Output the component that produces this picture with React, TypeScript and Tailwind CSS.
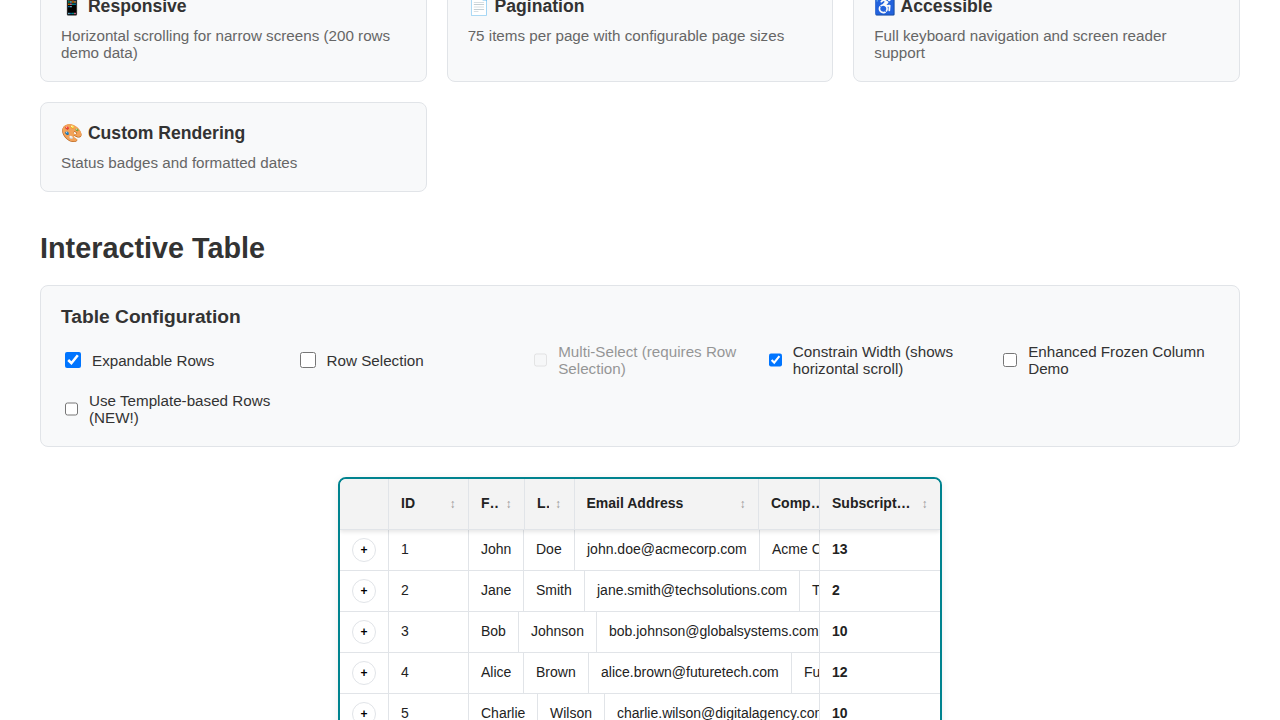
const features = [
  { icon: "📱", title: "Responsive", text: "Horizontal scrolling for narrow screens (200 rows demo data)" },
  { icon: "📄", title: "Pagination", text: "75 items per page with configurable page sizes" },
  { icon: "♿", title: "Accessible", text: "Full keyboard navigation and screen reader support" },
  { icon: "🎨", title: "Custom Rendering", text: "Status badges and formatted dates" },
];

const options = [
  { label: "Expandable Rows", checked: true },
  { label: "Row Selection" },
  { label: "Multi-Select (requires Row Selection)", disabled: true },
  { label: "Constrain Width (shows horizontal scroll)", checked: true },
  { label: "Enhanced Frozen Column Demo" },
  { label: "Use Template-based Rows (NEW!)" },
];

const columns = [
  { label: "ID", width: 80 },
  { label: "First Name", width: 56 },
  { label: "Last Name", width: 49.5 },
  { label: "Email Address", width: 184.5 },
  { label: "Company", width: 96 },
];

const rows = [
  { id: 1, first: "John", last: "Doe", email: "john.doe@acmecorp.com", company: "Acme Corporation", subs: 13, w: [80, 55, 51, 185] },
  { id: 2, first: "Jane", last: "Smith", email: "jane.smith@techsolutions.com", company: "TechSolutions", subs: 2, w: [80, 55, 61, 215] },
  { id: 3, first: "Bob", last: "Johnson", email: "bob.johnson@globalsystems.com", company: "Global Systems", subs: 10, w: [80, 50, 78, 240] },
  { id: 4, first: "Alice", last: "Brown", email: "alice.brown@futuretech.com", company: "FutureTech", subs: 12, w: [80, 55, 65, 203] },
  { id: 5, first: "Charlie", last: "Wilson", email: "charlie.wilson@digitalagency.com", company: "Digital Agency", subs: 10, w: [80, 69, 67, 260] },
];

function SortIcon() {
  return <span className="w-[7px] shrink-0 text-center text-[12px] leading-none text-[#999]">↕</span>;
}

export default function App() {
  return (
    <div className="h-[720px] overflow-hidden bg-white font-['Liberation_Sans',Arial,sans-serif] text-[#333]">
      <div className="mx-auto mt-[-25px] w-[1200px]">
        <div className="grid grid-cols-3 gap-5">
          {features.map((f) => (
            <div key={f.title} className="rounded-lg border border-[#e1e4e8] bg-[#f8f9fa] p-5">
              <h3 className="mb-[11px] text-[17.6px] leading-[20px] font-bold text-[#333]">
                {f.icon} {f.title}
              </h3>
              <p className="text-[15.2px] leading-[17px] text-[#666]">{f.text}</p>
            </div>
          ))}
        </div>

        <h2 className="mt-10 mb-5 text-[28.8px] leading-[33px] font-bold text-[#333]">Interactive Table</h2>

        <div className="rounded-lg border border-[#e1e4e8] bg-[#f8f9fa] p-5">
          <h3 className="mb-[15px] text-[19.2px] leading-[22px] font-bold text-[#333]">Table Configuration</h3>
          <div className="grid grid-cols-5 gap-[15px]">
            {options.map((o) => (
              <label
                key={o.label}
                className={
                  o.disabled
                    ? "flex h-[34px] items-center gap-2 text-[15.2px] leading-[17px] text-[#333] opacity-50"
                    : "flex h-[34px] items-center gap-2 text-[15.2px] leading-[17px] text-[#333]"
                }
              >
                <input
                  type="checkbox"
                  readOnly
                  checked={!!o.checked}
                  disabled={o.disabled}
                  className="mt-[3px] mr-[3px] mb-[3px] ml-1 h-4 w-4"
                />
                <span>{o.label}</span>
              </label>
            ))}
          </div>
        </div>

        <div className="mx-auto mt-[30px] w-[604px] overflow-hidden rounded-lg border-2 border-[#00838f] text-[14px] text-[#222] shadow-[0_2px_8px_rgba(0,0,0,0.08)]">
          <div className="relative z-10 flex h-[51px] border-b border-[#e1e4e8] bg-[#f3f3f3] font-bold shadow-[0_2px_4px_rgba(0,0,0,0.1)]">
            <div className="flex min-w-0 flex-1 overflow-hidden">
              <div className="w-[49px] shrink-0 border-r border-[#e1e4e8]" />
              {columns.map((c) => (
                <div
                  key={c.label}
                  style={{ width: c.width }}
                  className="flex shrink-0 items-center gap-1.5 border-r border-[#e1e4e8] px-3 pb-px"
                >
                  <span className="min-w-0 flex-1 truncate">{c.label}</span>
                  <SortIcon />
                </div>
              ))}
            </div>
            <div className="flex w-[121px] shrink-0 items-center gap-2.5 border-l border-[#e1e4e8] px-3 pb-px">
              <span className="min-w-0 flex-1 truncate">Subscriptions</span>
              <SortIcon />
            </div>
          </div>
          {rows.map((r) => (
            <div key={r.id} className="flex h-[41px] border-b border-[#e1e4e8] bg-white">
              <div className="flex min-w-0 flex-1 overflow-hidden">
                <div className="flex w-[49px] shrink-0 items-center justify-center border-r border-[#e1e4e8]">
                  <button className="flex h-6 w-6 items-center justify-center rounded-full border border-[#e1e4e8] bg-white text-[12px] leading-none font-bold text-black">
                    +
                  </button>
                </div>
                {[r.id, r.first, r.last, r.email].map((value, i) => (
                  <div
                    key={i}
                    style={{ width: r.w[i] }}
                    className="flex shrink-0 items-center border-r border-[#e1e4e8] px-3 pb-0.5 whitespace-nowrap"
                  >
                    {value}
                  </div>
                ))}
                <div className="flex shrink-0 items-center px-3 pb-0.5 whitespace-nowrap">{r.company}</div>
              </div>
              <div className="flex w-[121px] shrink-0 items-center border-l border-[#e1e4e8] px-3 pb-0.5 font-bold">
                {r.subs}
              </div>
            </div>
          ))}
        </div>
      </div>
    </div>
  );
}
